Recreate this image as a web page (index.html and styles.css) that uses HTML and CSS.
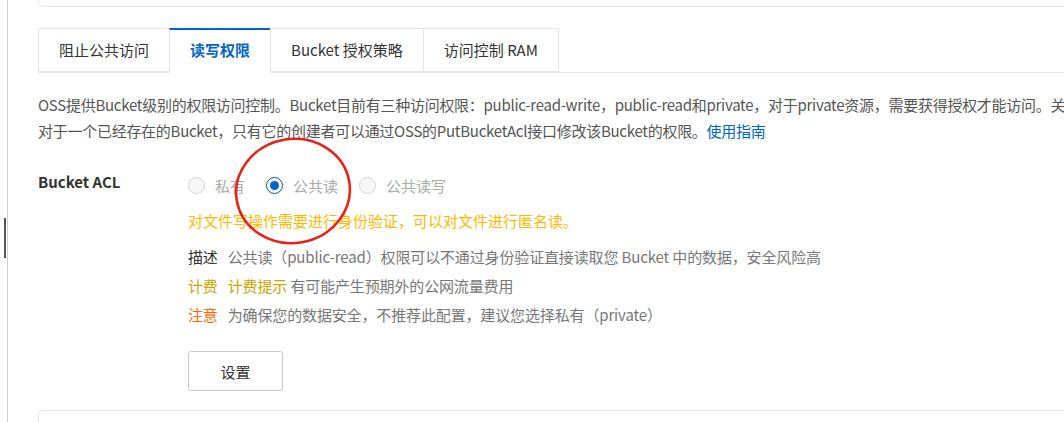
FILE: index.html
```html
<!DOCTYPE html>
<html lang="zh-CN">
<head>
    <meta charset="UTF-8">
    <meta name="viewport" content="width=device-width, initial-scale=1.0">
    <title>读写权限</title>
    <link rel="stylesheet" href="styles.css">
</head>
<body>

    <!-- Scrollbar mark on the left edge -->
    <div class="scroll-mark"></div>

    <div class="page">
        <!-- Bottom of the card above -->
        <div class="card card-top"></div>

        <!-- Tabs -->
        <div class="tabs">
            <a href="#" class="tab">阻止公共访问</a>
            <a href="#" class="tab active">读写权限</a>
            <a href="#" class="tab">Bucket 授权策略</a>
            <a href="#" class="tab">访问控制 RAM</a>
        </div>

        <!-- Description -->
        <p class="intro">
            OSS提供Bucket级别的权限访问控制。Bucket目前有三种访问权限：public-read-write，public-read和private，对于private资源，需要获得授权才能访问。关于Bucket权限的详细说明请参考文档。<br>
            对于一个已经存在的Bucket，只有它的创建者可以通过OSS的PutBucketAcl接口修改该Bucket的权限。<a href="#" class="link">使用指南</a>
        </p>

        <!-- ACL form -->
        <div class="acl-row">
            <div class="acl-label">Bucket ACL</div>
            <div class="acl-control">
                <div class="radio-group">
                    <label class="radio"><span class="dot"></span>私有</label>
                    <label class="radio checked"><span class="dot"></span>公共读</label>
                    <label class="radio"><span class="dot"></span>公共读写</label>
                </div>
                <div class="hint">对文件写操作需要进行身份验证，可以对文件进行匿名读。</div>
                <ul class="meta">
                    <li><span class="meta-key">描述</span>公共读（public-read）权限可以不通过身份验证直接读取您 Bucket 中的数据，安全风险高</li>
                    <li><span class="meta-key fee">计费</span><span class="fee">计费提示</span> 有可能产生预期外的公网流量费用</li>
                    <li><span class="meta-key warn">注意</span>为确保您的数据安全，不推荐此配置，建议您选择私有（private）</li>
                </ul>
                <button class="btn">设置</button>
            </div>
        </div>

        <!-- Top of the next card -->
        <div class="card card-bottom"></div>
    </div>

    <!-- Hand drawn marker around the selected option -->
    <svg class="marker" width="130" height="122" viewBox="0 0 130 122">
        <ellipse cx="64" cy="60" rx="57" ry="52" transform="rotate(-10 64 60)" fill="none" stroke="#e8231b" stroke-width="2.6"/>
    </svg>

</body>
</html>
```

FILE: styles.css
```css
body {
    margin: 0;
    font-family: "Noto Sans CJK SC", "Noto Sans", sans-serif;
    font-size: 15px;
    color: #333;
    background-color: #fff;
    overflow: hidden;
}

.scroll-mark {
    position: absolute;
    left: 4px;
    top: 218px;
    width: 2px;
    height: 40px;
    background-color: #555;
}

/* Page column with the thin rule on the left */
.page {
    margin-left: 7px;
    border-left: 1px solid #cfcfcf;
    padding-left: 30px;
    min-height: 422px;
}

.card {
    margin-right: -10px;
    border: 1px solid #e5e5e5;
    height: 20px;
}

.card-top {
    margin-top: -14px;
    border-top: none;
    border-radius: 0 0 5px 5px;
}

.card-bottom {
    margin-top: 19px;
    border-bottom: none;
    border-radius: 5px 5px 0 0;
}

/* Tabs */
.tabs {
    display: flex;
    margin-top: 21px;
    border-bottom: 1px solid #e5e5e5;
}

.tab {
    height: 42px;
    line-height: 41px;
    padding: 0 20px;
    border: 1px solid #e5e5e5;
    margin-right: -1px;
    margin-bottom: -1px;
    color: #333;
    text-decoration: none;
    background-color: #fff;
}

.tab.active {
    border-top: 2px solid #0064c8;
    border-bottom-color: #fff;
    line-height: 40px;
    color: #0064c8;
    font-weight: 600;
}

/* Intro text */
.intro {
    margin: 19px 0 0;
    line-height: 26px;
    color: #555;
    letter-spacing: -0.27px;
    white-space: nowrap;
}

.link {
    color: #0064c8;
    text-decoration: none;
}

/* ACL form */
.acl-row {
    display: flex;
    margin-top: 29px;
}

.acl-label {
    width: 150px;
    line-height: 24px;
    margin-top: -3px;
    font-weight: 600;
    color: #333;
}

.radio-group {
    display: flex;
    gap: 21px;
    height: 24px;
    align-items: center;
}

.radio {
    display: flex;
    align-items: center;
    gap: 10px;
    color: #aaa;
}

.dot {
    width: 15px;
    height: 15px;
    border: 1px solid #cfd2d8;
    border-radius: 50%;
    background-color: #f7f7f7;
    position: relative;
}

.radio.checked .dot {
    border-color: #0b4f99;
    background-color: #fff;
}

.radio.checked .dot::after {
    content: "";
    position: absolute;
    left: 3px;
    top: 3px;
    width: 9px;
    height: 9px;
    border-radius: 50%;
    background-color: #0064c8;
}

.hint {
    margin-top: 12px;
    line-height: 24px;
    color: #ffb900;
}

.meta {
    list-style: none;
    margin: 9px 0 0;
    padding: 0;
}

.meta li {
    line-height: 29px;
    color: #777;
    letter-spacing: -0.14px;
    white-space: nowrap;
}

.meta-key {
    color: #333;
    margin-right: 10px;
}

.fee {
    color: #c9a400;
}

.warn {
    color: #ff6a00;
}

.btn {
    display: block;
    margin-top: 22px;
    width: 95px;
    height: 40px;
    background-color: #fff;
    border: 1px solid #c6c8ce;
    border-radius: 3px;
    font-family: inherit;
    font-size: 15px;
    color: #333;
    cursor: pointer;
}

/* Red marker drawn over the radios */
.marker {
    position: absolute;
    left: 229px;
    top: 131px;
}
```
